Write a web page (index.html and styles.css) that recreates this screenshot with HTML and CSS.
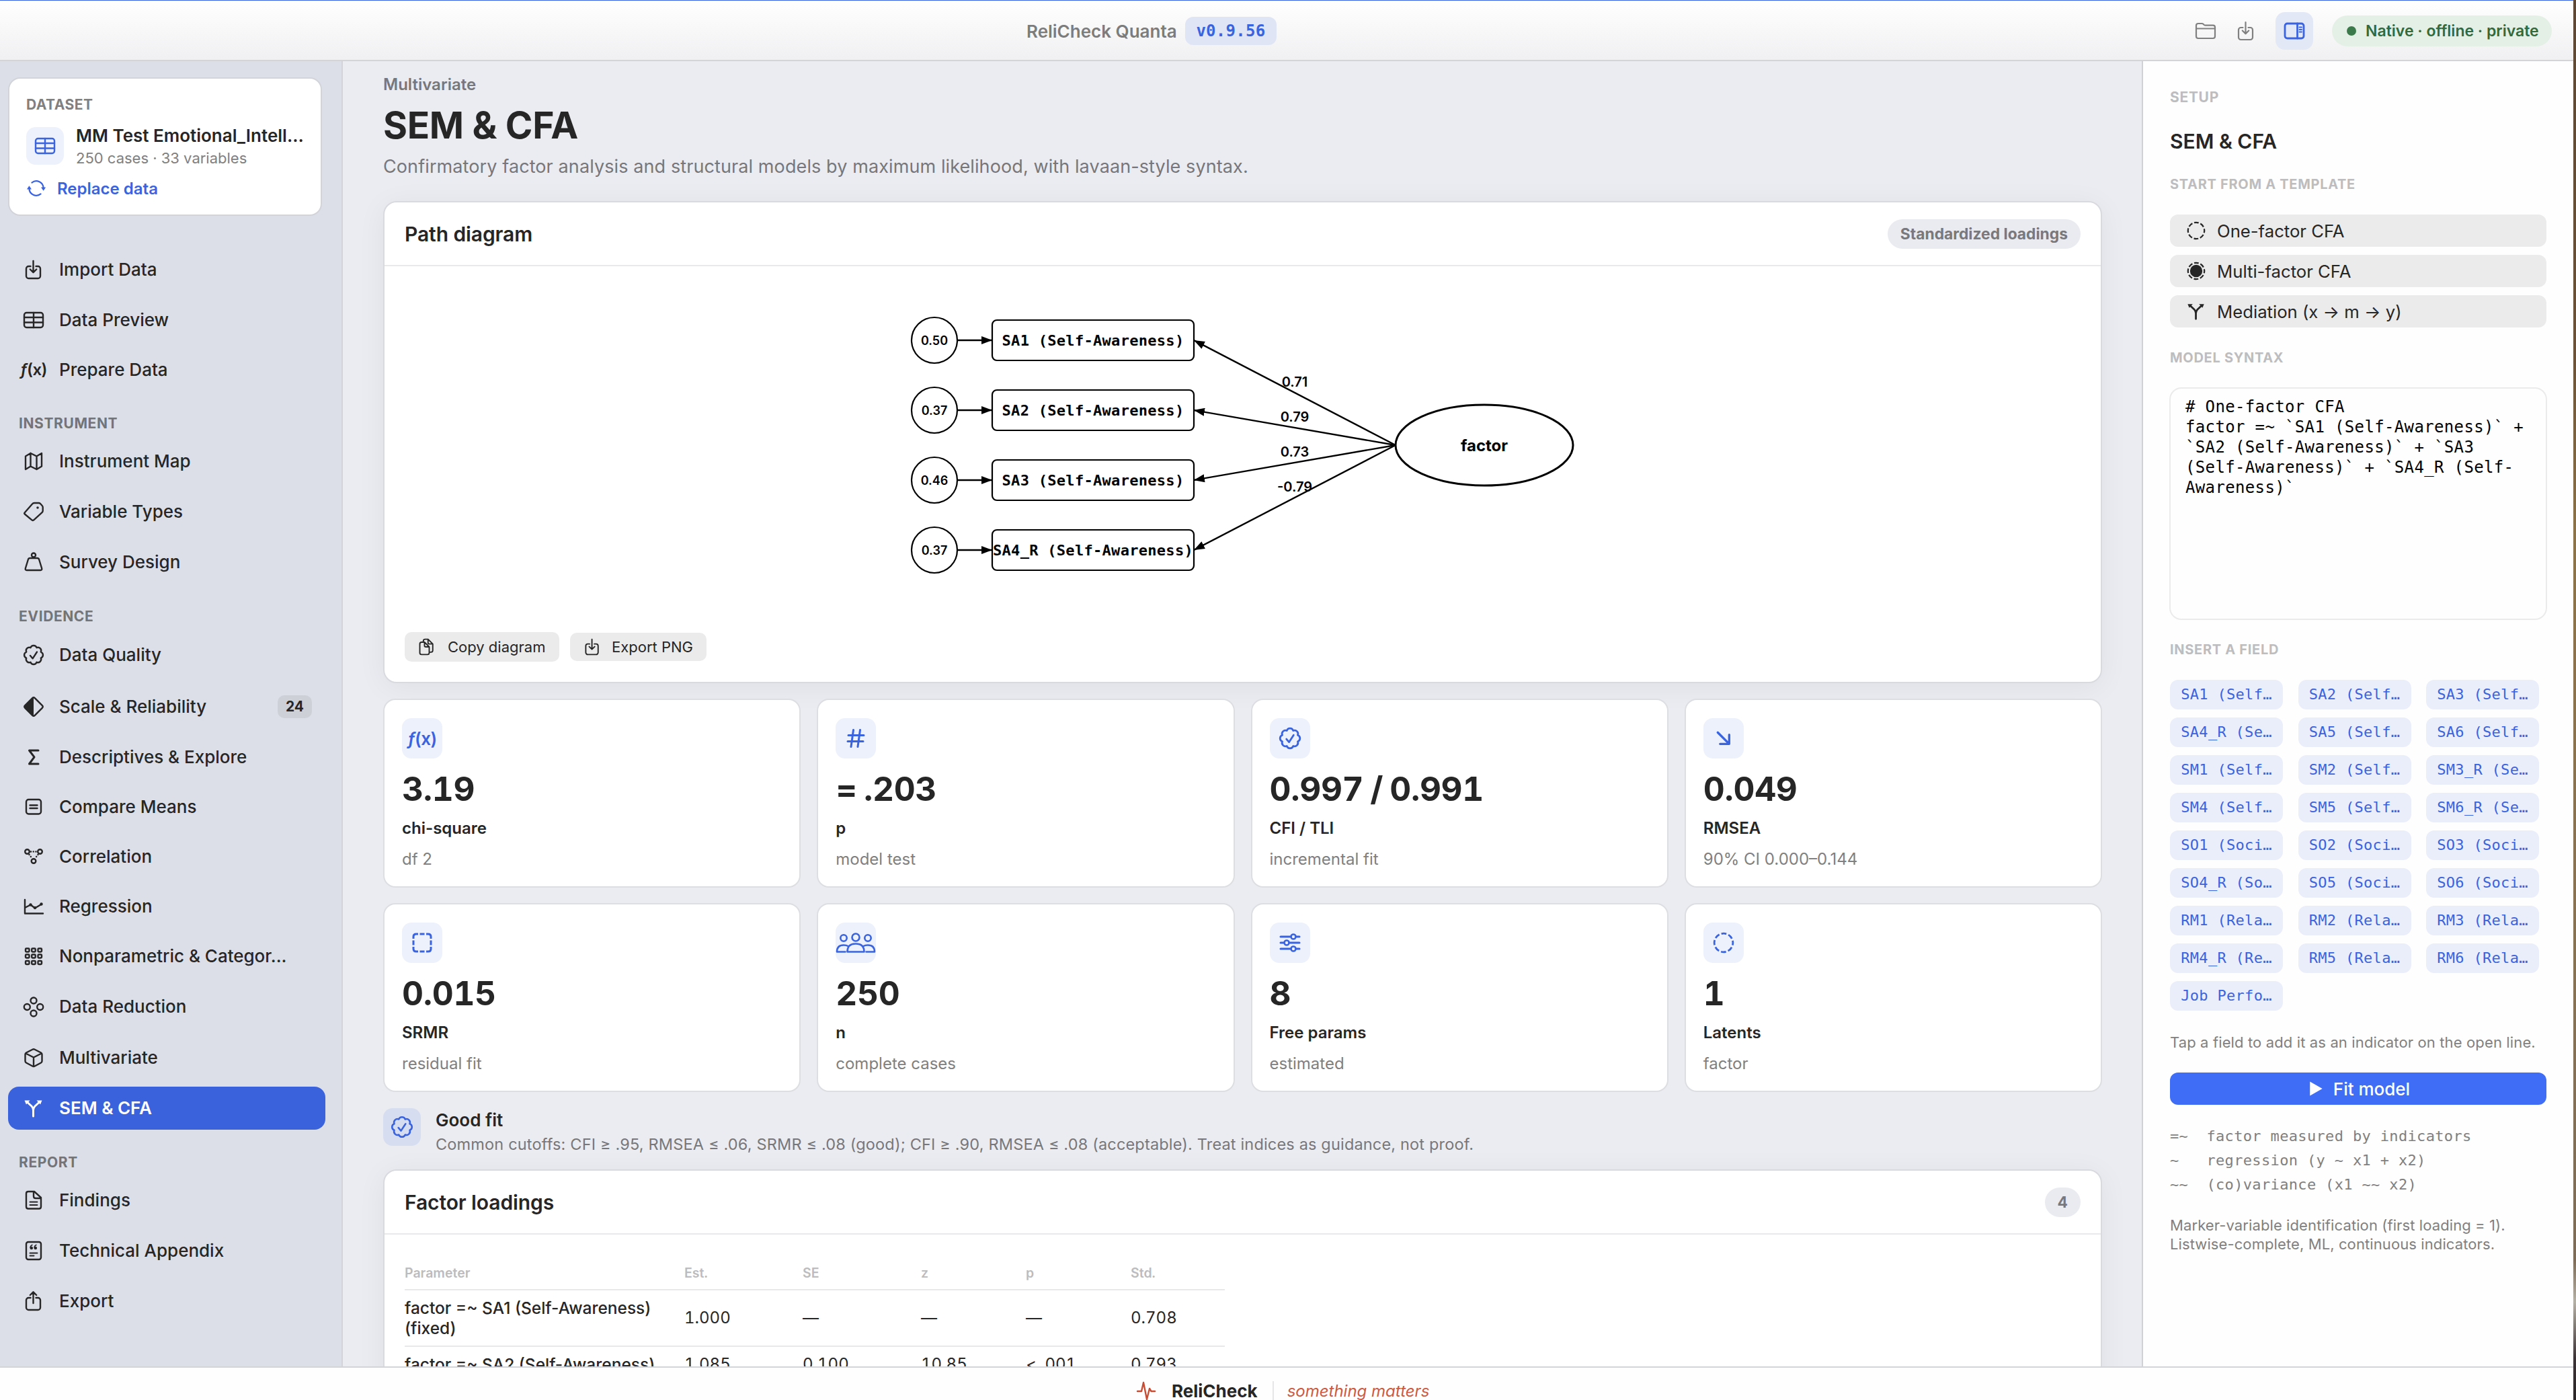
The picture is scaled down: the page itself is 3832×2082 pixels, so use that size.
FILE: index.html
```html
<!DOCTYPE html>
<html lang="en">
<head>
  <meta charset="UTF-8">
  <title>ReliCheck Quanta</title>
  <link rel="stylesheet" href="styles.css">
</head>
<body>
  <!-- icon sprite -->
  <svg class="sprite" width="0" height="0">
    <symbol id="i-import" viewBox="0 0 32 32"><path d="M11.5 11H8.5A3.5 3.5 0 0 0 5 14.5v11A3.5 3.5 0 0 0 8.5 29h14a3.5 3.5 0 0 0 3.5-3.5v-11a3.5 3.5 0 0 0-3.5-3.5h-3M15.5 3v17M10.8 15.5l4.7 4.7 4.7-4.7"/></symbol>
    <symbol id="i-export" viewBox="0 0 32 32"><path d="M11.5 11H8.5A3.5 3.5 0 0 0 5 14.5v11A3.5 3.5 0 0 0 8.5 29h14a3.5 3.5 0 0 0 3.5-3.5v-11a3.5 3.5 0 0 0-3.5-3.5h-3M15.5 19V2.5M10.8 7l4.7-4.7L20.2 7"/></symbol>
    <symbol id="i-table" viewBox="0 0 32 32"><rect x="2" y="5" width="28" height="22" rx="3.5"/><path d="M2 12h28M2 19.5h28M16 5v22"/></symbol>
    <symbol id="i-map" viewBox="0 0 32 32"><path d="M4 8.5 11.5 4l9 4.5L28 4v19.5L20.5 28l-9-4.5L4 28zM11.5 4v19.5M20.5 8.5V28"/></symbol>
    <symbol id="i-tag" viewBox="0 0 32 32"><path d="M2.8 17.2 14 4.5Q15.2 3 17 3h6.5Q25 3 26 4l2.7 3q1 1 1 2.5v5q0 1.5-1.2 2.7L16.5 28.2q-1.7 1.5-3.4 0L2.8 19.5q-1.1-1.1 0-2.3z"/><circle class="fill" cx="22" cy="10" r="1.8"/></symbol>
    <symbol id="i-mass" viewBox="0 0 32 32"><circle cx="16" cy="5.5" r="3"/><path d="M10.5 10h11q2 0 2.6 2l4 13q.8 3-1.8 3H5.7q-2.6 0-1.8-3l4-13q.6-2 2.6-2z"/></symbol>
    <symbol id="i-seal" viewBox="0 0 32 32"><path d="M26.8 11.5a4.8 4.8 0 0 1 0 9 4.8 4.8 0 0 1-6.3 6.3 4.8 4.8 0 0 1-9 0 4.8 4.8 0 0 1-6.3-6.3 4.8 4.8 0 0 1 0-9 4.8 4.8 0 0 1 6.3-6.3 4.8 4.8 0 0 1 9 0 4.8 4.8 0 0 1 6.3 6.3z"/><path d="m11 17 3.6 4.3L21 11.5"/></symbol>
    <symbol id="i-diamond" viewBox="0 0 32 32"><path d="M14.2 3.2q1.8-1.8 3.6 0l11 11q1.8 1.8 0 3.6l-11 11q-1.8 1.8-3.6 0l-11-11q-1.8-1.8 0-3.6z"/><path class="fill" d="M16 2 2 16l14 14z"/></symbol>
    <symbol id="i-sigma" viewBox="0 0 32 32"><path class="bold" d="M23 6H9.5l7.5 9.8L9.5 26H23"/></symbol>
    <symbol id="i-equal" viewBox="0 0 32 32"><rect x="5" y="5" width="22" height="21.5" rx="3.5"/><path d="M10.5 13.5h11M10.5 18h11"/></symbol>
    <symbol id="i-graph" viewBox="0 0 32 32"><circle cx="6.5" cy="8.5" r="3.3"/><circle cx="25.5" cy="8.5" r="3.3"/><circle cx="16" cy="22.5" r="3.3"/><path class="dots" d="M12 8.5h9M9.5 13l4 5M22.5 13l-4 5"/></symbol>
    <symbol id="i-chart" viewBox="0 0 32 32"><path d="M3 6v20.5h27M3 18l8.5-4.5L18 18.5 28 12.5"/><circle class="fill" cx="11.5" cy="13.5" r="2.2"/><circle class="fill" cx="18" cy="18" r="2.2"/><circle class="fill" cx="27.5" cy="12.5" r="2.2"/></symbol>
    <symbol id="i-grid" viewBox="0 0 32 32"><g id="g3"><rect x="4" y="4.5" width="5.5" height="5" rx="1.2"/><rect x="13.2" y="4.5" width="5.5" height="5" rx="1.2"/><rect x="22.5" y="4.5" width="5.5" height="5" rx="1.2"/></g><use href="#g3" y="9"/><use href="#g3" y="18.5"/></symbol>
    <symbol id="i-circles" viewBox="0 0 32 32"><circle cx="16" cy="7" r="4.5"/><circle cx="16" cy="26" r="4.5"/><circle cx="6.3" cy="16.5" r="4.5"/><circle cx="25.7" cy="16.5" r="4.5"/></symbol>
    <symbol id="i-cube" viewBox="0 0 32 32"><path d="M14.3 3.7q1.7-.9 3.4 0l9.3 4.8q1.5.8 1.5 2.5v10q0 1.7-1.5 2.5l-9.3 5q-1.7.9-3.4 0L5 23.5Q3.5 22.7 3.5 21V11q0-1.7 1.5-2.5zM4.2 9.5 16 15.5l11.8-6M16 15.5v13.3"/></symbol>
    <symbol id="i-branch" viewBox="0 0 32 32"><path class="bold" d="M15.5 28v-9q0-3.5-2.5-6L7 7.5M15.5 19q0-3.5 2.5-6l6-5.5"/><path class="fill" d="M2.5 4.5h8l-5.5 6zM28.500 4.500h-8l5.500 6z"/></symbol>
    <symbol id="i-doc" viewBox="0 0 32 32"><path d="M8 3h9l10 9v13.500q0 3-3 3H8q-3 0-3-3V6q0-3 3-3zM16 3v7q0 3 3 3h8"/><path class="thin" d="M10.500 18.500h11M10.500 23h11"/></symbol>
    <symbol id="i-quote" viewBox="0 0 32 32"><rect x="5" y="3" width="22" height="26" rx="3"/><path class="thin" d="M10.500 19.500h11M10.500 23.500h6"/><circle class="fill" cx="12.800" cy="12" r="2.300"/><circle class="fill" cx="18.800" cy="12" r="2.300"/><path class="thin" d="M11.200 11q.2-2.500 2.500-3.500M17.200 11q.2-2.500 2.500-3.500"/></symbol>
    <symbol id="i-cycle" viewBox="0 0 32 32"><path d="M9 7a11.300 11.300 0 0 1 18.300 8.500M23 25A11.300 11.300 0 0 1 4.700 16.500"/><path class="fill" d="M23.500 14.500h7.500L27.300 20zM1 17.500h7.500L4.700 12z"/></symbol>
    <symbol id="i-folder" viewBox="0 0 32 32"><path d="M2 24V8q0-3 3-3h5.500q1.200 0 2 .8l1.300 1.200q.8.700 2 .7H27q3 0 3 3V24q0 3-3 3H5q-3 0-3-3zM2 12.500h28"/></symbol>
    <symbol id="i-panel" viewBox="0 0 32 32"><rect x="2" y="5" width="28" height="22" rx="3.500"/><path d="M20.500 5v22"/><path class="thin" d="M23.500 10.500h3.500M23.500 14h3.500M23.500 17.500h3.500"/></symbol>
    <symbol id="i-copy" viewBox="0 0 32 32"><path d="M10 8V6q0-3 3-3h5l8 8v11q0 3-3 3h-2M18 3v6q0 2 2 2h6"/><path d="M7 8h5l8 8v10q0 3-3 3H7q-3 0-3-3V11q0-3 3-3zM12 8v6q0 2 2 2h6"/></symbol>
    <symbol id="i-hash" viewBox="0 0 32 32"><path class="bold" d="M12.500 3.500 9 28.500M22.500 3.500 19 28.500M5 11.500h23M4 20.500h23"/></symbol>
    <symbol id="i-downright" viewBox="0 0 32 32"><path class="heavy" d="M6 6 25 25M25.500 10v15.500H10"/></symbol>
    <symbol id="i-dashsquare" viewBox="0 0 32 32"><path class="bold butt" d="M3 10V7q0-4 4-4h3M22 3h3q4 0 4 4v3M29 22v3q0 4-4 4h-3M10 29H7q-4 0-4-4v-3M12.500 3h7M12.500 29h7M3 12.500v7M29 12.500v7"/></symbol>
    <symbol id="i-people" viewBox="0 0 60 32"><circle cx="30" cy="8" r="5.500"/><circle cx="12" cy="9" r="4.700"/><circle cx="48" cy="9" r="4.700"/><path d="M17.500 29.500q0-12 12.500-12t12.500 12zM14.500 29.500H2q0-10 10-10 4 0 6.500 1.500M45.500 29.500H58q0-10-10-10-4 0-6.500 1.500"/></symbol>
    <symbol id="i-sliders" viewBox="0 0 32 32"><path class="bold" d="M2 7h15M25 7h5M2 16h5M15 16h15M2 25h15M25 25h5"/><circle cx="21" cy="7" r="3.500"/><circle cx="11" cy="16" r="3.500"/><circle cx="21" cy="25" r="3.500"/></symbol>
    <symbol id="i-dashcircle" viewBox="0 0 32 32"><circle class="dashed" cx="16" cy="16" r="13"/></symbol>
    <symbol id="i-dashcircle-fill" viewBox="0 0 32 32"><circle class="dashed" cx="16" cy="16" r="13"/><circle class="fill" cx="16" cy="16" r="9.800"/></symbol>
    <symbol id="i-play" viewBox="0 0 32 32"><path class="fill" d="M6 4v24l21-12z"/></symbol>
    <symbol id="i-pulse" viewBox="0 0 32 32"><path d="M3 17h6l3-13 5 25 4-16 2.500 4H29"/></symbol>
  </svg>

  <div class="app">
    <header class="titlebar">
      <div class="brand">
        <span class="brand-name">ReliCheck Quanta</span>
        <span class="version">v0.9.56</span>
      </div>
      <div class="tools">
        <svg class="icon tool"><use href="#i-folder"/></svg>
        <svg class="icon tool"><use href="#i-import"/></svg>
        <span class="tool-active"><svg class="icon"><use href="#i-panel"/></svg></span>
        <span class="privacy"><i class="dot"></i>Native · offline · private</span>
      </div>
    </header>

    <aside class="sidebar">
      <div class="dataset">
        <div class="dataset-label">DATASET</div>
        <div class="dataset-row">
          <span class="dataset-icon"><svg class="icon"><use href="#i-table"/></svg></span>
          <div>
            <div class="dataset-name">MM Test Emotional_Intell...</div>
            <div class="dataset-meta">250 cases · 33 variables</div>
          </div>
        </div>
        <div class="replace"><svg class="icon"><use href="#i-cycle"/></svg>Replace data</div>
      </div>

      <ul class="nav">
        <li><a><svg class="icon"><use href="#i-import"/></svg>Import Data</a></li>
        <li><a><svg class="icon"><use href="#i-table"/></svg>Data Preview</a></li>
        <li class="short"><a><span class="fx"><i>ƒ</i>(x)</span>Prepare Data</a></li>
        <li class="section">INSTRUMENT</li>
        <li><a><svg class="icon"><use href="#i-map"/></svg>Instrument Map</a></li>
        <li><a><svg class="icon"><use href="#i-tag"/></svg>Variable Types</a></li>
        <li><a><svg class="icon"><use href="#i-mass"/></svg>Survey Design</a></li>
        <li class="section">EVIDENCE</li>
        <li class="tall"><a><svg class="icon"><use href="#i-seal"/></svg>Data Quality</a></li>
        <li class="tall"><a><svg class="icon"><use href="#i-diamond"/></svg>Scale &amp; Reliability<span class="count">24</span></a></li>
        <li class="short"><a><svg class="icon"><use href="#i-sigma"/></svg>Descriptives &amp; Explore</a></li>
        <li><a><svg class="icon"><use href="#i-equal"/></svg>Compare Means</a></li>
        <li class="short"><a><svg class="icon"><use href="#i-graph"/></svg>Correlation</a></li>
        <li><a><svg class="icon"><use href="#i-chart"/></svg>Regression</a></li>
        <li class="short"><a><svg class="icon"><use href="#i-grid"/></svg>Nonparametric &amp; Categor...</a></li>
        <li class="tall"><a><svg class="icon"><use href="#i-circles"/></svg>Data Reduction</a></li>
        <li><a><svg class="icon"><use href="#i-cube"/></svg>Multivariate</a></li>
        <li><a class="active"><svg class="icon"><use href="#i-branch"/></svg>SEM &amp; CFA</a></li>
        <li class="section">REPORT</li>
        <li><a><svg class="icon"><use href="#i-doc"/></svg>Findings</a></li>
        <li><a><svg class="icon"><use href="#i-quote"/></svg>Technical Appendix</a></li>
        <li><a><svg class="icon"><use href="#i-export"/></svg>Export</a></li>
      </ul>
    </aside>

    <main class="content">
      <div class="crumb">Multivariate</div>
      <h1>SEM &amp; CFA</h1>
      <p class="lead">Confirmatory factor analysis and structural models by maximum likelihood, with lavaan-style syntax.</p>

      <section class="card diagram-card">
        <div class="card-head"><h2>Path diagram</h2><span class="pill">Standardized loadings</span></div>
        <svg class="diagram" viewBox="1340 440 1020 440">
          <defs>
            <marker id="arrow" viewBox="0 0 16 12" refX="16" refY="6" markerWidth="16" markerHeight="12" markerUnits="userSpaceOnUse" orient="auto"><path d="M0 0 16 6 0 12z"/></marker>
          </defs>
          <g class="shape">
            <circle cx="1390" cy="506" r="34"/><circle cx="1390" cy="610" r="34"/><circle cx="1390" cy="714" r="34"/><circle cx="1390" cy="818" r="34"/>
            <rect x="1476" y="476" width="300" height="60" rx="7"/><rect x="1476" y="580" width="300" height="60" rx="7"/><rect x="1476" y="684" width="300" height="60" rx="7"/><rect x="1476" y="788" width="300" height="60" rx="7"/>
            <ellipse class="latent" cx="2208" cy="662" rx="132" ry="60"/>
          </g>
          <g class="edge">
            <path d="M1424 506h52"/><path d="M1424 610h52"/><path d="M1424 714h52"/><path d="M1424 818h52"/>
            <path d="M2076 662 1776 506"/><path d="M2076 662 1776 610"/><path d="M2076 662 1776 714"/><path d="M2076 662 1776 818"/>
          </g>
          <g class="resid">
            <text x="1390" y="512.500">0.50</text><text x="1390" y="616.500">0.37</text><text x="1390" y="720.500">0.46</text><text x="1390" y="824.500">0.37</text>
          </g>
          <g class="item">
            <text x="1626" y="514">SA1 (Self-Awareness)</text><text x="1626" y="618">SA2 (Self-Awareness)</text><text x="1626" y="722">SA3 (Self-Awareness)</text><text x="1626" y="826">SA4_R (Self-Awareness)</text>
          </g>
          <g class="weight">
            <text x="1926" y="575">0.71</text><text x="1926" y="627">0.79</text><text x="1926" y="679">0.73</text><text x="1926" y="731">-0.79</text>
          </g>
          <text class="factor" x="2208" y="671">factor</text>
        </svg>
        <div class="card-actions">
          <span class="btn"><svg class="icon"><use href="#i-copy"/></svg>Copy diagram</span>
          <span class="btn btn-export"><svg class="icon"><use href="#i-import"/></svg>Export PNG</span>
        </div>
      </section>

      <section class="stats">
        <div class="stat"><span class="badge"><span class="fx"><i>ƒ</i>(x)</span></span><b>3.19</b><strong>chi-square</strong><small>df 2</small></div>
        <div class="stat"><span class="badge"><svg class="icon"><use href="#i-hash"/></svg></span><b>= .203</b><strong>p</strong><small>model test</small></div>
        <div class="stat"><span class="badge"><svg class="icon big"><use href="#i-seal"/></svg></span><b>0.997 / 0.991</b><strong>CFI / TLI</strong><small>incremental fit</small></div>
        <div class="stat"><span class="badge"><svg class="icon sm"><use href="#i-downright"/></svg></span><b>0.049</b><strong>RMSEA</strong><small>90% CI 0.000–0.144</small></div>
        <div class="stat"><span class="badge"><svg class="icon"><use href="#i-dashsquare"/></svg></span><b>0.015</b><strong>SRMR</strong><small>residual fit</small></div>
        <div class="stat"><span class="badge"><svg class="icon wide"><use href="#i-people"/></svg></span><b>250</b><strong>n</strong><small>complete cases</small></div>
        <div class="stat"><span class="badge"><svg class="icon"><use href="#i-sliders"/></svg></span><b>8</b><strong>Free params</strong><small>estimated</small></div>
        <div class="stat"><span class="badge"><svg class="icon big"><use href="#i-dashcircle"/></svg></span><b>1</b><strong>Latents</strong><small>factor</small></div>
      </section>

      <div class="verdict">
        <span class="verdict-icon"><svg class="icon big"><use href="#i-seal"/></svg></span>
        <div>
          <div class="verdict-title">Good fit</div>
          <div class="verdict-text">Common cutoffs: CFI ≥ .95, RMSEA ≤ .06, SRMR ≤ .08 (good); CFI ≥ .90, RMSEA ≤ .08 (acceptable). Treat indices as guidance, not proof.</div>
        </div>
      </div>

      <section class="card loadings">
        <div class="card-head"><h2>Factor loadings</h2><span class="pill">4</span></div>
        <table>
          <tr><th class="c-param">Parameter</th><th class="c-num">Est.</th><th class="c-num">SE</th><th class="c-mid">z</th><th class="c-mid">p</th><th>Std.</th></tr>
          <tr><td class="param">factor =~ SA1 (Self-Awareness) (fixed)</td><td>1.000</td><td>—</td><td>—</td><td>—</td><td>0.708</td></tr>
          <tr><td class="param">factor =~ SA2 (Self-Awareness)</td><td>1.085</td><td>0.100</td><td>10.85</td><td>&lt; .001</td><td>0.793</td></tr>
        </table>
      </section>
    </main>

    <aside class="setup">
      <div class="eyebrow setup-label">SETUP</div>
      <div class="setup-title">SEM &amp; CFA</div>
      <div class="eyebrow">START FROM A TEMPLATE</div>
      <div class="templates">
        <span class="template"><svg class="icon"><use href="#i-dashcircle"/></svg>One-factor CFA</span>
        <span class="template"><svg class="icon"><use href="#i-dashcircle-fill"/></svg>Multi-factor CFA</span>
        <span class="template"><svg class="icon"><use href="#i-branch"/></svg>Mediation (x → m → y)</span>
      </div>
      <div class="eyebrow">MODEL SYNTAX</div>
      <pre class="syntax"># One-factor CFA
factor =~ `SA1 (Self-Awareness)` +
`SA2 (Self-Awareness)` + `SA3
(Self-Awareness)` + `SA4_R (Self-
Awareness)`</pre>
      <div class="eyebrow">INSERT A FIELD</div>
      <div class="fields">
        <span>SA1 (Self…</span><span>SA2 (Self…</span><span>SA3 (Self…</span>
        <span>SA4_R (Se…</span><span>SA5 (Self…</span><span>SA6 (Self…</span>
        <span>SM1 (Self…</span><span>SM2 (Self…</span><span>SM3_R (Se…</span>
        <span>SM4 (Self…</span><span>SM5 (Self…</span><span>SM6_R (Se…</span>
        <span>SO1 (Soci…</span><span>SO2 (Soci…</span><span>SO3 (Soci…</span>
        <span>SO4_R (So…</span><span>SO5 (Soci…</span><span>SO6 (Soci…</span>
        <span>RM1 (Rela…</span><span>RM2 (Rela…</span><span>RM3 (Rela…</span>
        <span>RM4_R (Re…</span><span>RM5 (Rela…</span><span>RM6 (Rela…</span>
        <span>Job Perfo…</span>
      </div>
      <div class="hint">Tap a field to add it as an indicator on the open line.</div>
      <div class="fit"><svg class="icon"><use href="#i-play"/></svg>Fit model</div>
      <pre class="legend">=~  factor measured by indicators
~   regression (y ~ x1 + x2)
~~  (co)variance (x1 ~~ x2)</pre>
      <div class="note">Marker-variable identification (first loading = 1).<br>Listwise-complete, ML, continuous indicators.</div>
    </aside>

    <footer class="footer">
      <svg class="icon"><use href="#i-pulse"/></svg>
      <span class="footer-name">ReliCheck</span>
      <span class="footer-rule"></span>
      <em>something matters</em>
    </footer>
  </div>
</body>
</html>
```
FILE: styles.css
```css
* {
  box-sizing: border-box;
}

body {
  margin: 0;
  overflow: hidden;
  width: 3832px;
  height: 2082px;
  padding-right: 4px;
  background: linear-gradient(#5e4835, #6b5238 25%, #8d7349 38%, #877255 70%, #7d6c58 90%, #b5b0a6 93%, #3d3437 97%, #2b2528);
  font-family: Inter, "Liberation Sans", sans-serif;
  color: #262626;
}

.sprite {
  position: absolute;
}

.app {
  display: grid;
  grid-template-columns: 510px 1fr 642px;
  grid-template-rows: 91px 1943px 48px;
  width: 3828px;
  height: 2082px;
}

.icon {
  width: 32px;
  height: 32px;
  flex: none;
  fill: none;
  stroke: currentColor;
  stroke-width: 2.4;
  stroke-linecap: round;
  stroke-linejoin: round;
}

.icon.big { width: 34px; height: 34px; }
.icon.sm { width: 28px; height: 28px; }
.icon.wide { width: 60px; height: 32px; }

.fill { fill: currentColor; stroke: none; }
.bold { stroke-width: 3; }
.heavy { stroke-width: 3.8; }
.thin { stroke-width: 1.9; }
.dots { stroke-dasharray: 0.1 3.6; }
.butt { stroke-linecap: butt; }

/* eight dashes round the circle */
.dashed {
  stroke-dasharray: 7.2 3.01;
  stroke-dashoffset: 3.6;
  stroke-linecap: butt;
}

/* title bar */
.titlebar {
  grid-column: 1 / 4;
  display: flex;
  align-items: center;
  justify-content: flex-end;
  padding: 2px 32px 0 1527px;
  background: linear-gradient(#fff, #f0f0f2);
  border-top: 1px solid #3a63df;
  border-bottom: 2px solid #d3d4d8;
}

.brand {
  display: flex;
  align-items: center;
  justify-content: space-between;
  width: 372px;
  margin-right: auto;
}

.brand-name {
  font-size: 26px;
  font-weight: 600;
  color: #7c7c7d;
}

.version {
  width: 136px;
  border-radius: 12px;
  background: #e0e5f5;
  color: #3a63df;
  font: bold 24px/42px "DejaVu Sans Mono", monospace;
  letter-spacing: 0.3px;
  text-align: center;
}

.tools {
  display: flex;
  align-items: center;
  color: #808080;
}

.tool {
  margin-right: 28px;
}

.tools .tool {
  stroke-width: 2.2;
}

.tool-active {
  display: flex;
  align-items: center;
  justify-content: center;
  width: 56px;
  height: 56px;
  margin-right: 28px;
  border-radius: 14px;
  background: #e3e8f6;
  color: #3a63df;
}

.tool-active .icon {
  stroke-width: 2.8;
}

.privacy {
  display: flex;
  align-items: center;
  width: 327px;
  height: 46px;
  padding-left: 22px;
  border-radius: 23px;
  background: #e4f0e5;
  color: #2f6b3f;
  font-size: 23px;
  font-weight: 600;
  white-space: nowrap;
}

.dot {
  width: 14px;
  height: 14px;
  margin-right: 14px;
  border-radius: 50%;
  background: #3b7a4a;
}

/* sidebar */
.sidebar {
  padding: 24px 0 0 12px;
  background: #dddfe8;
  border-right: 2px solid #d3d4d9;
}

.dataset {
  width: 467px;
  height: 206px;
  padding: 24px 25px 0;
  border: 2px solid #d2d4da;
  border-radius: 18px;
  background: #fff;
}

.dataset-label {
  font-size: 21px;
  font-weight: 700;
  line-height: 30px;
  letter-spacing: 0.5px;
  color: #808080;
}

.dataset-row {
  display: flex;
  gap: 18px;
  margin-top: 14px;
}

.dataset-icon {
  display: flex;
  align-items: center;
  justify-content: center;
  width: 56px;
  height: 56px;
  margin-top: 4px;
  border-radius: 14px;
  background: #edf1fb;
  color: #3a63df;
}

.dataset-name {
  font-size: 26px;
  font-weight: 600;
  line-height: 34px;
  white-space: nowrap;
}

.dataset-meta {
  font-size: 22px;
  line-height: 32px;
  color: #808080;
}

.replace {
  display: flex;
  align-items: center;
  gap: 16px;
  margin-top: 14px;
  color: #3a63df;
  font-size: 24px;
  font-weight: 600;
}

.replace .icon {
  width: 30px;
  height: 30px;
}

.nav {
  list-style: none;
  margin: 42px 0 0;
  padding: 0;
}

.nav li {
  display: flex;
  align-items: center;
  height: 75px;
}

.nav .tall { height: 77px; }
.nav .short { height: 73px; }

.nav .section {
  height: 62px;
  padding: 24px 0 0 16px;
  font-size: 21px;
  font-weight: 700;
  letter-spacing: 0.6px;
  color: #737477;
}

.nav a {
  display: flex;
  align-items: center;
  width: 472px;
  height: 64px;
  padding: 0 20px 0 22px;
  border-radius: 16px;
  font-size: 26px;
  font-weight: 500;
  white-space: nowrap;
}

.nav .icon {
  margin-right: 22px;
}

.nav .active {
  background: #3a62dd;
  color: #fff;
  font-weight: 600;
}

.fx {
  font-size: 24px;
  font-weight: 600;
  letter-spacing: -0.5px;
}

.nav .fx {
  width: 44px;
  margin: 0 16px 0 -6px;
  text-align: center;
}

.count {
  width: 51px;
  margin-left: auto;
  border-radius: 10px;
  background: #ced0d8;
  font-size: 21px;
  font-weight: 700;
  line-height: 34px;
  text-align: center;
}

/* main column */
.content {
  overflow: hidden;
  padding: 19px 59px 0 60px;
  background: #ebecf1;
}

.crumb {
  font-size: 24px;
  font-weight: 600;
  line-height: 32px;
  color: #77777b;
}

h1 {
  margin: 12px 0 0;
  font-size: 55px;
  font-weight: 700;
  line-height: 64px;
  letter-spacing: -0.3px;
}

.lead {
  margin: 10px 0 0;
  font-size: 27px;
  line-height: 40px;
  letter-spacing: 0.1px;
  color: #77777b;
}

.card {
  border: 2px solid #d9dadf;
  border-radius: 20px;
  background: #fff;
  box-shadow: 0 6px 44px rgba(20, 20, 60, 0.055);
}

.card-head {
  display: flex;
  align-items: center;
  justify-content: space-between;
  height: 95px;
  padding: 0 30px;
  border-bottom: 2px solid #e9e9eb;
}

h2 {
  margin: 0;
  font-size: 30px;
  font-weight: 600;
  letter-spacing: -0.1px;
}

.pill {
  padding: 0 19px;
  border-radius: 22px;
  background: #eaebf0;
  color: #79797d;
  font-size: 22.8px;
  font-weight: 700;
  line-height: 44px;
}

.diagram-card {
  height: 717px;
  margin-top: 31px;
}

.diagram {
  display: block;
  width: 1020px;
  height: 440px;
  margin: 44px 0 0 768px;
}

.shape {
  fill: #fff;
  stroke: #000;
  stroke-width: 2.2;
}

.latent {
  stroke-width: 3;
}

.edge {
  fill: none;
  stroke: #000;
  stroke-width: 2.4;
}

.edge path {
  marker-end: url(#arrow);
}

.diagram text {
  fill: #000;
  font-weight: 600;
  text-anchor: middle;
}

.resid { font-size: 18px; }
.weight { font-size: 20px; }
.diagram .factor { font-size: 24px; font-weight: 700; }

.item {
  font-family: "DejaVu Sans Mono", monospace;
  font-size: 22px;
  letter-spacing: 0.3px;
}

.card-actions {
  display: flex;
  align-items: center;
  gap: 16px;
  margin: 60px 0 0 30px;
}

.btn {
  display: flex;
  align-items: center;
  width: 230px;
  height: 44px;
  padding-left: 18px;
  border-radius: 10px;
  background: #ebebeb;
  font-size: 22px;
}

.btn-export {
  width: 203px;
  height: 42px;
}

.btn .icon {
  width: 30px;
  height: 28px;
  margin-right: 16px;
  stroke-width: 2.2;
}

.btn-export .icon {
  margin-right: 14px;
}

.stats {
  display: grid;
  grid-template-columns: repeat(4, 1fr);
  gap: 23px 24px;
  margin-top: 23px;
}

.stat {
  display: flex;
  flex-direction: column;
  height: 281px;
  padding: 27px 26px 0;
  border: 2px solid #dddee2;
  border-radius: 18px;
  background: #fff;
}

.badge {
  display: flex;
  align-items: center;
  justify-content: center;
  width: 60px;
  height: 60px;
  border-radius: 14px;
  background: #edf1fb;
  color: #3a63df;
}

.badge .icon {
  stroke-width: 2.6;
}

.badge .fx {
  font-size: 26px;
}

.stat b {
  margin-top: 15px;
  font-size: 49.5px;
  font-variant-numeric: tabular-nums;
  line-height: 60px;
  letter-spacing: -0.3px;
  word-spacing: -3px;
}

.stat strong {
  margin-top: 12px;
  font-size: 24px;
  font-weight: 600;
  line-height: 34px;
}

.stat small {
  margin-top: 12px;
  font-size: 24px;
  line-height: 34px;
  color: #808080;
}

.verdict {
  display: flex;
  gap: 22px;
  height: 91px;
  margin-top: 24px;
}

.verdict-icon {
  display: flex;
  align-items: center;
  justify-content: center;
  width: 56px;
  height: 56px;
  border-radius: 14px;
  background: #d7ddf0;
  color: #3a63df;
}

.verdict-title {
  font-size: 26px;
  font-weight: 600;
  line-height: 36px;
}

.verdict-text {
  font-size: 23.5px;
  line-height: 36px;
  letter-spacing: 0.17px;
  color: #77777b;
}

.loadings {
  height: 600px;
}

table {
  width: 1220px;
  margin: 36px 0 0 30px;
  border-collapse: collapse;
  table-layout: fixed;
  font-variant-numeric: tabular-nums;
}

th {
  height: 46px;
  padding: 0 0 3px;
  border-bottom: 2px solid #e8e8ea;
  font-size: 19.5px;
  font-weight: 600;
  text-align: left;
  color: #bcbcbf;
}

td {
  padding: 11px 0;
  border-bottom: 2px solid #e8e8ea;
  font-size: 24px;
  line-height: 30px;
}

.c-param { width: 416px; }
.c-num { width: 176px; }
.c-mid { width: 156px; }
th:nth-child(4) { width: 156px; }

.param {
  padding-right: 30px;
  font-size: 24.5px;
  font-weight: 500;
  font-variant-numeric: normal;
}

/* setup panel */
.setup {
  padding: 39px 40px 0;
  background: #fefefe;
  border-left: 2px solid #d0d1d7;
}

.eyebrow {
  font-size: 20px;
  font-weight: 700;
  line-height: 30px;
  letter-spacing: 0.7px;
  color: #bdbdbf;
}

.setup-label {
  font-size: 21px;
}

.setup-title {
  margin: 31px 0 30px;
  font-size: 30px;
  font-weight: 600;
  line-height: 38px;
}

.templates {
  display: flex;
  flex-direction: column;
  gap: 12px;
  margin: 30px 0;
}

.template {
  display: flex;
  align-items: center;
  height: 48px;
  padding-left: 24px;
  border-radius: 12px;
  background: #ebebeb;
  font-size: 25.7px;
}

.template .icon {
  width: 30px;
  height: 30px;
  margin-right: 16px;
}

.template .dashed {
  stroke-width: 2;
}

.syntax {
  height: 346px;
  margin: 29px -1px;
  padding: 12px 22px;
  border: 2px solid #ebebeb;
  border-radius: 18px;
  color: #000;
  font: 24px/30px "DejaVu Sans Mono", monospace;
  letter-spacing: 0.35px;
}

.fields {
  display: grid;
  grid-template-columns: repeat(3, 168px);
  gap: 12px 22.5px;
  margin-top: 30px;
}

.fields span {
  height: 44px;
  border-radius: 12px;
  background: #eaeefa;
  color: #3a63df;
  font: 22px/44px "DejaVu Sans Mono", monospace;
  letter-spacing: 0.3px;
  text-align: center;
  white-space: nowrap;
}

.hint {
  margin-top: 32px;
  font-size: 22px;
  line-height: 30px;
  letter-spacing: 0.13px;
  white-space: nowrap;
  color: #808080;
}

.fit {
  display: flex;
  align-items: center;
  justify-content: center;
  gap: 12px;
  height: 48px;
  margin-top: 30px;
  border-radius: 12px;
  background: #3f6df6;
  color: #fff;
  font-size: 26px;
  font-weight: 500;
}

.fit .icon {
  width: 28px;
  height: 28px;
}

.legend {
  margin: 29px 0 0;
  color: #808080;
  font: 22px/36px "DejaVu Sans Mono", monospace;
  letter-spacing: 0.35px;
}

.note {
  margin-top: 28px;
  font-size: 22px;
  line-height: 28px;
  letter-spacing: 0.1px;
  white-space: nowrap;
  color: #808080;
}

/* footer */
.footer {
  grid-column: 1 / 4;
  display: flex;
  align-items: center;
  padding: 20px 0 0 1689px;
  background: #fefefe;
  border-top: 2px solid #d3d4d8;
  margin-top: -2px;
  color: #c84c32;
}

.footer-name {
  margin-left: 22px;
  font-size: 26px;
  font-weight: 700;
  color: #262626;
}

.footer-rule {
  width: 2px;
  height: 28px;
  margin: 0 20px 0 22px;
  background: #e6e6e8;
}

.footer em {
  font-size: 24px;
  color: #cd5a42;
}
```
